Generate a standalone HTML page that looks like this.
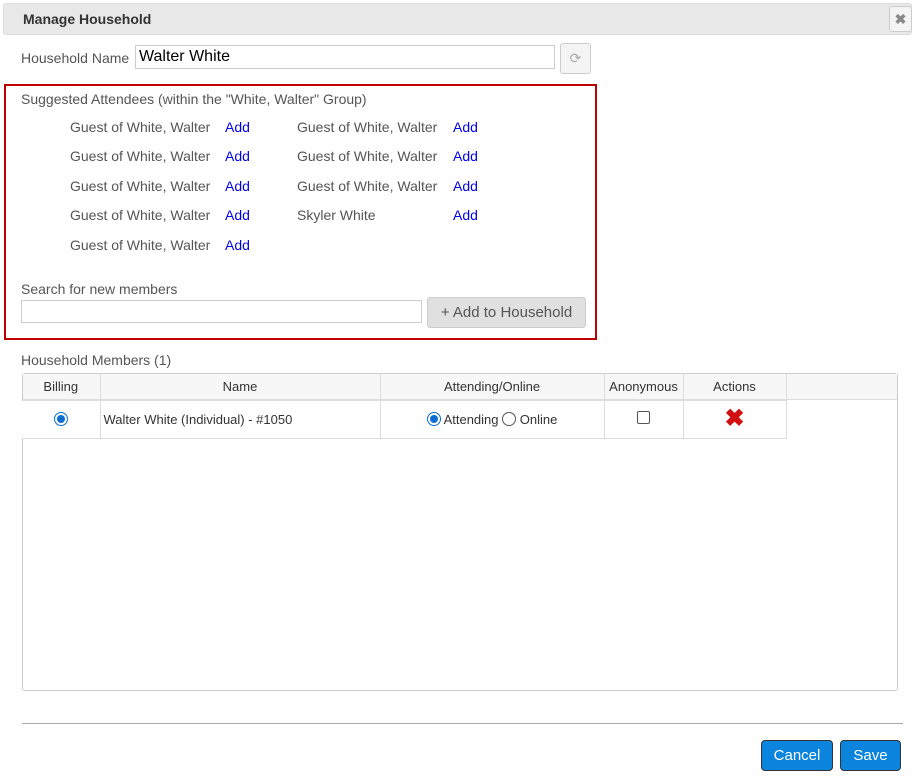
<!DOCTYPE html>
<html><head><meta charset="utf-8"><style>
*{box-sizing:border-box}
body{margin:0;width:914px;height:778px;background:#fff;font-family:"Liberation Sans",Arial,sans-serif;font-size:14px;color:#555;position:relative;overflow:hidden}
.a{position:absolute;white-space:nowrap}
.add{color:#0000ee}
.hdr{left:3px;top:3px;width:909px;height:32px;background:#e8e8e8;border:1px solid #ddd;border-radius:3px}
table{border-collapse:collapse}
td,th{border:1px solid #ddd;font-weight:normal;text-align:center;color:#333;font-size:13px}
.btn{background:#0a84dc;color:#fff;border:1px solid #333;border-radius:4px;font-size:15px;text-align:center;line-height:30px}
.radio{display:inline-block;width:14px;height:14px;border-radius:50%;border:1px solid #555;vertical-align:-2px;position:relative}
.radio.on{border-color:#0a6fd0}
.radio.on:after{content:"";position:absolute;left:2px;top:2px;width:8px;height:8px;border-radius:50%;background:#0a6fd0}
</style></head><body>
<div class="a hdr"></div>
<div class="a" style="left:23px;top:11px;font-weight:bold;color:#333;font-size:14px">Manage Household</div>
<div class="a" style="left:889px;top:6px;width:23px;height:26px;border:1px solid #ccc;border-radius:3px;background:#f4f4f4;text-align:center;line-height:24px;color:#888;font-weight:bold">✖</div>

<div class="a" style="left:21px;top:50px">Household Name</div>
<div class="a" style="left:135px;top:45px;width:420px;height:24px;border:1px solid #ccc;color:#000;font-size:16px;padding:2px 3px">Walter White</div>
<div class="a" style="left:560px;top:43px;width:31px;height:31px;border:1px solid #ccc;border-radius:3px;background:#f4f4f4;text-align:center;line-height:29px;color:#aaa">⟳</div>

<div class="a" style="left:4px;top:84px;width:593px;height:256px;border:2px solid #c00000"></div>
<div class="a" style="left:21px;top:91px">Suggested Attendees (within the "White, Walter" Group)</div>
<div class="a" style="left:70px;top:119px">Guest of White, Walter</div><div class="a add" style="left:225px;top:119px">Add</div>
<div class="a" style="left:297px;top:119px">Guest of White, Walter</div><div class="a add" style="left:453px;top:119px">Add</div>
<div class="a" style="left:70px;top:148px">Guest of White, Walter</div><div class="a add" style="left:225px;top:148px">Add</div>
<div class="a" style="left:297px;top:148px">Guest of White, Walter</div><div class="a add" style="left:453px;top:148px">Add</div>
<div class="a" style="left:70px;top:178px">Guest of White, Walter</div><div class="a add" style="left:225px;top:178px">Add</div>
<div class="a" style="left:297px;top:178px">Guest of White, Walter</div><div class="a add" style="left:453px;top:178px">Add</div>
<div class="a" style="left:70px;top:207px">Guest of White, Walter</div><div class="a add" style="left:225px;top:207px">Add</div>
<div class="a" style="left:297px;top:207px">Skyler White</div><div class="a add" style="left:453px;top:207px">Add</div>
<div class="a" style="left:70px;top:237px">Guest of White, Walter</div><div class="a add" style="left:225px;top:237px">Add</div>

<div class="a" style="left:21px;top:281px">Search for new members</div>
<div class="a" style="left:21px;top:300px;width:401px;height:23px;border:1px solid #ccc"></div>
<div class="a" style="left:427px;top:297px;width:159px;height:31px;border:1px solid #ccc;border-radius:3px;background:#e0e0e0;text-align:center;line-height:30px;color:#555;font-size:15px">+ Add to Household</div>

<div class="a" style="left:21px;top:352px">Household Members (1)</div>
<div class="a" style="left:22px;top:373px;width:876px;height:318px;border:1px solid #ccc;border-radius:3px"></div>
<div class="a" style="left:23px;top:374px;width:874px;height:26px;background:#f7f7f7;border-bottom:1px solid #ddd"></div>
<table class="a" style="left:22px;top:373px">
<tr style="height:27px"><th style="width:78px;border-top:0;border-left:0">Billing</th><th style="width:280px;border-top:0">Name</th><th style="width:224px;border-top:0">Attending/Online</th><th style="width:79px;border-top:0">Anonymous</th><th style="width:103px;border-top:0">Actions</th></tr>
<tr style="height:38px;background:#fff"><td style="border-left:0"><span class="radio on"></span></td><td style="text-align:left;padding-left:3px">Walter White (Individual) - #1050</td><td><span class="radio on"></span> Attending <span class="radio"></span> Online</td><td><span style="display:inline-block;width:13px;height:13px;border:1px solid #555;border-radius:2px"></span></td><td style="color:#d01010;font-size:24px;font-weight:bold;line-height:20px">✖</td></tr>
</table>

<div class="a" style="left:22px;top:723px;width:881px;height:1px;background:#aaa"></div>
<div class="a btn" style="left:761px;top:740px;width:72px;height:31px">Cancel</div>
<div class="a btn" style="left:840px;top:740px;width:61px;height:31px">Save</div>
</body></html>
